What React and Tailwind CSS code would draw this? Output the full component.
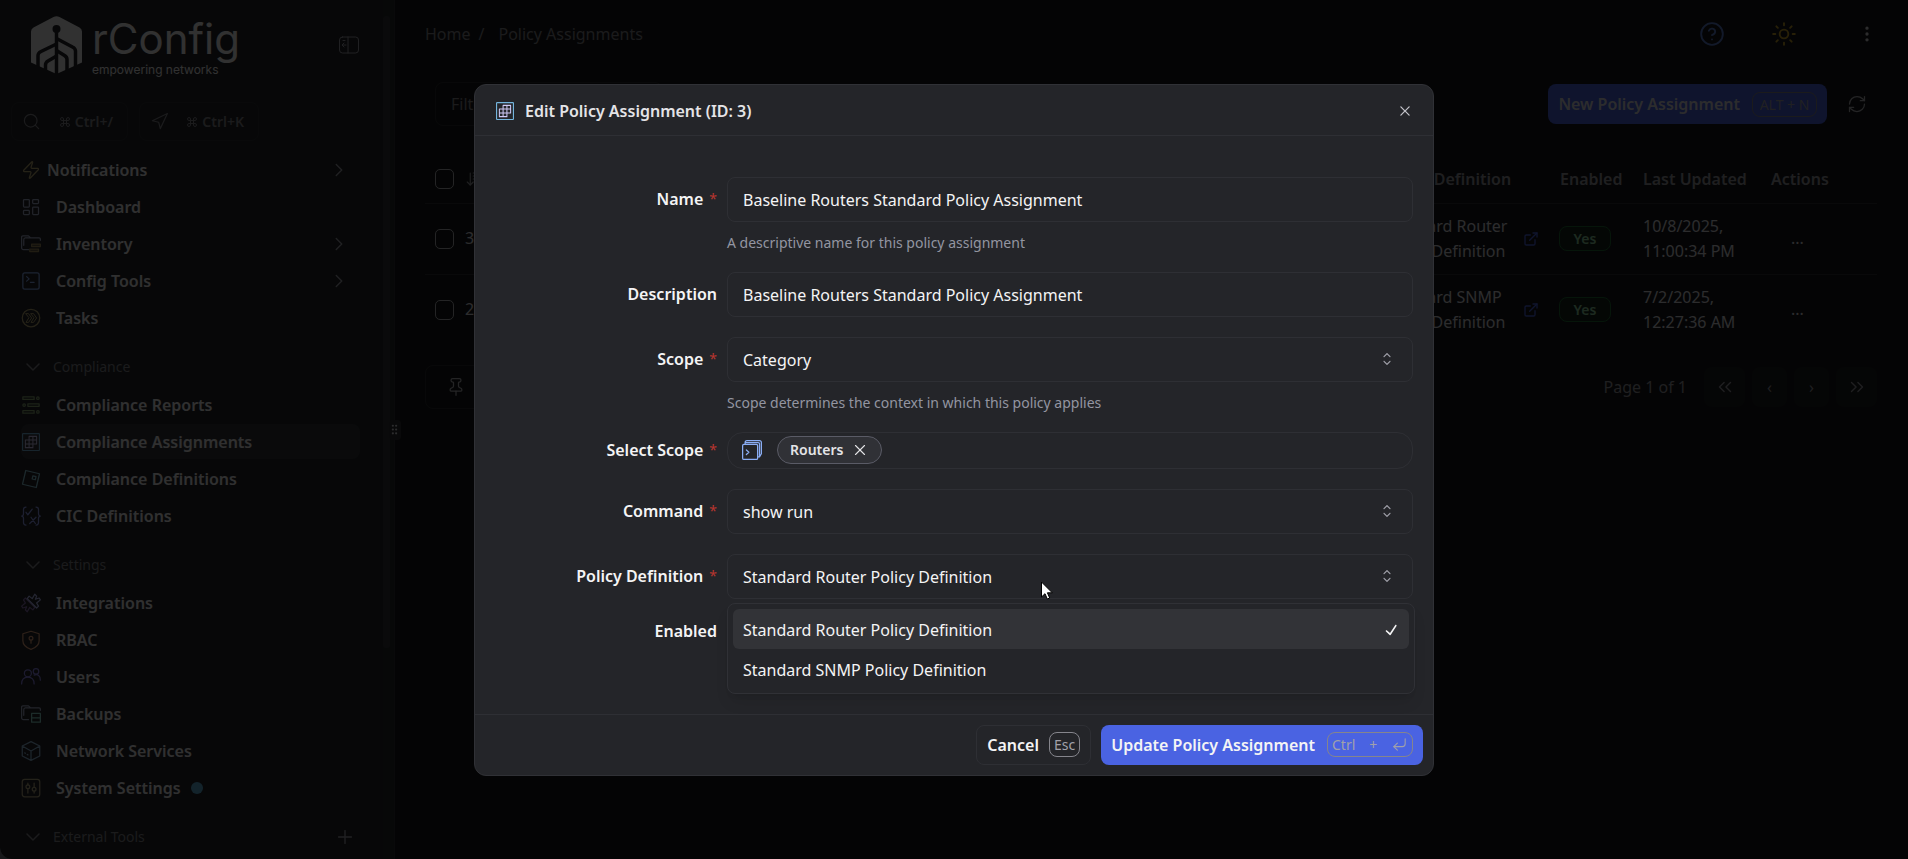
import { useState } from 'react';
import {
  ArrowDownWideNarrow,
  ChevronDown,
  ChevronRight,
  ChevronsLeft,
  ChevronsRight,
  CircleHelp,
  Command,
  CornerDownLeft,
  EllipsisVertical,
  ExternalLink,
  GripVertical,
  LayoutDashboard,
  Navigation,
  Pin,
  Plus,
  RefreshCw,
  Search,
  Sun,
  X,
  Zap
} from 'lucide-react';
import { RxCaretSort, RxCheck, RxCross2 } from 'react-icons/rx';

const Glyph = ({ children, className = 'size-5' }) => (
  <svg viewBox="0 0 16 16" className={`shrink-0 ${className}`} fill="none" strokeLinecap="round" strokeLinejoin="round" aria-hidden="true">
    {children}
  </svg>
);

const InventoryIcon = () => (
  <Glyph>
    <path stroke="#a5adcb" d="M6 12.5H2A1.5 1.5 0 0 1 .5 11V2.5a1 1 0 0 1 1-1H6L7.5 3h7a1 1 0 0 1 1 1v1M2.2 9V4.5A1.5 1.5 0 0 1 3.5 3h4" />
    <path stroke="#a08c5c" fill="#a08c5c" fillOpacity=".5" d="M8.5 8h7v2h-7zM7 12h7v2H7z" />
  </Glyph>
);

const ConfigIcon = () => (
  <Glyph>
    <rect x="1.5" y="1.5" width="13" height="13" rx="1.5" stroke="#8aadf4" />
    <path stroke="#8aadf4" d="M4.5 4.5l2 1.8-2 1.8M7.5 9h3" />
  </Glyph>
);

const TasksIcon = () => (
  <Glyph>
    <circle cx="8" cy="8" r="7" stroke="#b8a874" />
    <path stroke="#b8a874" strokeWidth=".8" d="M4 4.5h2L8.5 8 6 11.5H4L6.2 8zM8 4.5h2L12.5 8 10 11.5H8L10.2 8z" />
  </Glyph>
);

const ReportsIcon = () => (
  <Glyph>
    <g stroke="#8ba876">
      <path d="M1.5 1.5h9v2h-9zM5.5 7h9v2h-9zM1.5 12.5h9v2h-9z" />
      <circle cx="13.5" cy="2.5" r="1" />
      <circle cx="2.5" cy="8" r="1" />
      <circle cx="13.5" cy="13.5" r="1" />
    </g>
  </Glyph>
);

const AssignmentsIcon = () => (
  <Glyph className="size-[18px]">
    <rect x=".5" y=".5" width="15" height="15" rx=".5" stroke="#74b4dc" />
    <path stroke="#cfc9f5" strokeWidth=".9" d="M6.3 3H13v6.7H9.7V13H3V6.3h10M3 9.7h6.7M6.3 3v10M9.7 3v6.7" />
  </Glyph>
);

const DefinitionsIcon = () => (
  <Glyph>
    <path stroke="#8bc6d8" d="M3.8 1.2l11 2.6-2.6 11-11-2.6z" />
    <path stroke="#8bc6d8" d="M9.5 5.5l2.5.6-.6 2.5-2.5-.6z" />
  </Glyph>
);

const CicIcon = () => (
  <Glyph>
    <g stroke="#8f9df0">
      <path d="M4 .8c-1.5 0-2 .7-2 2V6c0 1-.5 2-1.5 2 1 0 1.5 1 1.5 2v3.2c0 1.3.5 2 2 2M12 .8c1.5 0 2 .7 2 2V6c0 1 .5 2 1.5 2-1 0-1.5 1-1.5 2v3.2c0 1.3-.5 2-2 2" />
      <path d="M4 5l1.5 2L9 2.5M8 9l3.5 5M12 9l-5 5" />
    </g>
  </Glyph>
);

const IntegrationsIcon = () => (
  <Glyph>
    <path stroke="#8a6fb0" d="M11 11.5L9.5 13.5 7 11.5 5 15l-1.5-1.5L4.5 11l-3 1L.5 10.5 3.5 8 2 5.5 3.5 4z" />
    <path stroke="#b7bdf8" d="M5 4.5L6.5 2.5 9 4.5 11 1l1.5 1.5L11.5 5l3-1 1 1.5L12.5 8l1.5 2.5-1.5 1.5z" />
  </Glyph>
);

const RbacIcon = () => (
  <Glyph>
    <g stroke="#e0a07c">
      <path d="M8 1l6.5 2v5.5c0 3-2.5 5.5-6.5 7-4-1.5-6.5-4-6.5-7V3z" />
      <circle cx="8" cy="6.5" r="1.5" />
      <path d="M8 8v2.5" />
    </g>
  </Glyph>
);

const UsersIcon = () => (
  <Glyph>
    <g stroke="#8c84e8">
      <circle cx="5.5" cy="5" r="2.8" />
      <circle cx="12" cy="3.5" r="2.2" />
      <path d="M.5 13.5c0-3.5 2-5.5 5-5.5s5 2 5 5.5M10.5 6.5c3-1 5 .5 5 4" />
    </g>
  </Glyph>
);

const BackupsIcon = () => (
  <Glyph>
    <path stroke="#a5adcb" d="M6 12.5H2A1.5 1.5 0 0 1 .5 11V2.5a1 1 0 0 1 1-1H6L7.5 3h7a1 1 0 0 1 1 1v1M2.2 9V4.5A1.5 1.5 0 0 1 3.5 3h4" />
    <path stroke="#8bd5ca" d="M8.5 7.5h7v7h-7zM8.5 11h7" />
  </Glyph>
);

const NetworkIcon = () => (
  <Glyph>
    <path stroke="#8fb7d6" d="M8 .5l7 3.5v8l-7 3.5L1 12V4zM1 4l7 4 7-4M8 8v7.5M3 9.5l.5.3M5 10.8l.5.3" />
  </Glyph>
);

const SystemIcon = () => (
  <Glyph>
    <g stroke="#b5a983">
      <rect x="1" y="1" width="14" height="14" rx="2" />
      <circle cx="5.5" cy="7" r="1.5" />
      <circle cx="10.5" cy="9" r="1.5" />
      <path d="M5.5 4v1.5M5.5 8.5V12M10.5 4v3.5M10.5 10.5V12" />
    </g>
  </Glyph>
);

const CategoryIcon = () => (
  <Glyph>
    <g stroke="#8aadf4">
      <rect x=".5" y="3.5" width="12" height="12" rx="1" />
      <path d="M2.5 3.5V2a1.5 1.5 0 0 1 1.5-1.5h10A1.5 1.5 0 0 1 15.5 2v9l-1.5 2.5h-1.5M2.5 2h10.5a1 1 0 0 1 1 1v10M3.5 8l2 1.8-2 1.8" />
    </g>
  </Glyph>
);

const Logo = () => (
  <div className="flex items-start gap-2.5 text-[#f4f4f5]">
    <svg viewBox="0 0 51 58" className="h-[58px] w-[51px]" fill="none" aria-hidden="true">
      <path fill="currentColor" d="M22.5 1a6 6 0 0 1 6 0L48.5 11.5A5 5 0 0 1 51 16v30.5L25.5 58 0 46.5V16a5 5 0 0 1 2.5-4.5z" />
      <circle cx="25.5" cy="13" r="4" fill="#242529" />
      <g stroke="#242529" strokeWidth="3.5" strokeLinejoin="round">
        <path d="M25.5 13v45" />
        <path d="M25.5 22.5L41.5 31q3 1.5 3 4v20M25.5 28L10 35.5q-3 1.5-3 4V56" />
        <path d="M25.5 34.5l8 5q2.5 1.5 2.5 4V58M25.5 40l-8.5 5q-2.5 1.5-2.5 4v9" />
      </g>
    </svg>
    <div className="flex flex-col font-['Inter',sans-serif]">
      <span className="text-[42px] leading-[46px]">rConfig</span>
      <span className="text-xs leading-4">empowering networks</span>
    </div>
  </div>
);

const mainLinks = [
  { label: 'Dashboard', icon: <LayoutDashboard size={20} strokeWidth={1.5} className="text-[#a5adcb]" /> },
  { label: 'Inventory', icon: <InventoryIcon />, expandable: true },
  { label: 'Config Tools', icon: <ConfigIcon />, expandable: true },
  { label: 'Tasks', icon: <TasksIcon /> }
];

const complianceLinks = [
  { label: 'Compliance Reports', icon: <ReportsIcon /> },
  { label: 'Compliance Assignments', icon: <AssignmentsIcon />, active: true },
  { label: 'Compliance Definitions', icon: <DefinitionsIcon /> },
  { label: 'CIC Definitions', icon: <CicIcon /> }
];

const settingsLinks = [
  { label: 'Integrations', icon: <IntegrationsIcon /> },
  { label: 'RBAC', icon: <RbacIcon /> },
  { label: 'Users', icon: <UsersIcon /> },
  { label: 'Backups', icon: <BackupsIcon /> },
  { label: 'Network Services', icon: <NetworkIcon /> },
  { label: 'System Settings', icon: <SystemIcon />, dot: true }
];

const NavLink = ({ label, icon, active, expandable, dot }) => (
  <a href="#" className={`flex h-[35px] items-center rounded-lg pr-2.5 ${active ? 'bg-[#35363b]' : ''}`}>
    <span className="flex w-5 shrink-0 justify-center">{icon}</span>
    <span className="ml-[15px] font-semibold">{label}</span>
    {dot && <span className="ml-2.5 size-3 rounded-full bg-[#5fb0d8]" />}
    {expandable && <ChevronRight size={22} strokeWidth={1.5} className="ml-auto text-[#a1a1aa]" />}
  </a>
);

const SectionHeader = ({ label, action }) => (
  <div className="mt-3 mb-px flex h-[35px] items-center pr-1 text-sm text-[#85858c]">
    <button type="button" className="flex items-center gap-2">
      <ChevronDown size={24} strokeWidth={1.5} />
      {label}
    </button>
    {action && (
      <button type="button" aria-label="Add external tool" className="ml-auto text-[#a1a1aa]">
        <Plus size={22} strokeWidth={1.5} />
      </button>
    )}
  </div>
);

const Sidebar = () => (
  <aside className="flex w-[394px] shrink-0 rounded-bl-xl bg-[#242529] text-[#eeeef0]">
    <div className="flex min-w-0 grow flex-col pl-[11px]">
      <div className="flex h-[102px] items-start justify-between pt-4 pr-6 pl-5">
        <Logo />
        <button type="button" aria-label="Collapse sidebar" className="mt-5 text-[#a1a1aa]">
          <svg viewBox="0 0 20 18" className="h-[18px] w-5" fill="none" stroke="currentColor" strokeLinecap="round">
            <rect x=".5" y="1" width="19" height="16" rx="3" />
            <path d="M9 1v16M7 9H3.5M5 7L3 9l2 2M4 4.500h2" />
          </svg>
        </button>
      </div>
      <div className="flex gap-[11px]">
        <button type="button" className="flex h-[39px] w-[117px] items-center justify-between rounded-lg border border-[#303136] pr-3.5 pl-2.5 text-[#85858c]">
          <Search size={19} strokeWidth={1.5} />
          <span className="flex items-center gap-1 text-sm font-semibold"><Command size={12} />Ctrl+/</span>
        </button>
        <button type="button" className="flex h-[39px] w-[120px] items-center justify-between rounded-lg border border-[#303136] pr-3.5 pl-2.5 text-[#85858c]">
          <Navigation size={19} strokeWidth={1.5} />
          <span className="flex items-center gap-1 text-sm font-semibold"><Command size={12} />Ctrl+K</span>
        </button>
      </div>
      <nav className="mt-[11px] mr-[23px] ml-2.5 flex flex-col gap-0.5">
        <a href="#" className="flex h-[35px] items-center pr-2.5">
          <Zap size={20} strokeWidth={1.5} className="text-[#b8a874]" />
          <span className="ml-1.5 font-semibold">Notifications</span>
          <ChevronRight size={22} strokeWidth={1.5} className="ml-auto text-[#a1a1aa]" />
        </a>
        {mainLinks.map(link => <NavLink key={link.label} {...link} />)}
        <SectionHeader label="Compliance" />
        {complianceLinks.map(link => <NavLink key={link.label} {...link} />)}
        <SectionHeader label="Settings" />
        {settingsLinks.map(link => <NavLink key={link.label} {...link} />)}
        <SectionHeader label="External Tools" action />
      </nav>
    </div>
    <div className="flex w-[11px] flex-col bg-[#27282c] pt-4">
      <div className="h-3/4 w-[7px] rounded-full bg-[#34353a]" />
    </div>
  </aside>
);

const rows = [
  { id: 3, definition: 'Standard Router Policy Definition', date: '10/8/2025,', time: '11:00:34 PM' },
  { id: 2, definition: 'Standard SNMP Policy Definition', date: '7/2/2025,', time: '12:27:36 AM' }
];

const Checkbox = ({ label }) => (
  <input type="checkbox" aria-label={label} className="block h-5 w-[19px] appearance-none rounded-[5px] border border-[#b4b4ba]" />
);

const PolicyTable = () => (
  <table className="mt-7 w-full table-fixed border-collapse text-left">
    <colgroup>
      <col className="w-[30px]" />
      <col className="w-[90px]" />
      <col />
      <col className="w-[176px]" />
      <col className="w-[83px]" />
      <col className="w-32" />
      <col className="w-[116px]" />
    </colgroup>
    <thead>
      <tr className="h-12 border-b border-[#303136] text-[#9a9aa2]">
        <th className="pl-2.5"><Checkbox label="Select all" /></th>
        <th className="px-2.5"><ArrowDownWideNarrow size={18} strokeWidth={1.5} /></th>
        <th className="px-2.5 font-semibold" aria-label="Policy name" />
        <th className="px-2.5 font-semibold whitespace-nowrap">Policy Definition</th>
        <th className="px-2.5 font-semibold">Enabled</th>
        <th className="px-2.5 font-semibold whitespace-nowrap">Last Updated</th>
        <th className="px-2.5 font-semibold">Actions</th>
      </tr>
    </thead>
    <tbody className="divide-y divide-[#303136]">
      {rows.map(row => (
        <tr key={row.id} className="h-[71px] leading-[25px] text-[#dcdce0]">
          <td className="pl-2.5"><Checkbox label={`Select ${row.id}`} /></td>
          <td className="px-2.5">{row.id}</td>
          <td />
          <td className="pl-2.5">
            <div className="flex items-center justify-between pr-[11px]">
              <span className="w-[134px]">{row.definition}</span>
              <a href="#" aria-label="Open definition"><ExternalLink size={16} className="text-[#4a63e2]" /></a>
            </div>
          </td>
          <td className="pl-[9px]">
            <span className="flex h-[25px] w-[52px] items-center justify-center rounded-lg border border-[#1f6b35] bg-[#14241c] text-sm font-semibold text-[#8fcf9f]">Yes</span>
          </td>
          <td className="px-2.5">{row.date}<br />{row.time}</td>
          <td className="pl-[30px]"><button type="button" aria-label="Row actions">...</button></td>
        </tr>
      ))}
    </tbody>
  </table>
);

const Page = () => (
  <main className="flex min-w-0 grow flex-col bg-[#17181a] pr-[31px] pl-[30px]">
    <header className="flex h-[68px] items-center justify-between">
      <nav aria-label="Breadcrumb" className="flex text-[#85858c]">
        <a href="#">Home</a>
        <span className="mr-3.5 ml-2">/</span>
        <a href="#">Policy Assignments</a>
      </nav>
      <div className="flex items-center">
        <button type="button" aria-label="Help" className="text-[#5b7fd0]"><CircleHelp size={26} strokeWidth={1.7} /></button>
        <button type="button" aria-label="Toggle theme" className="ml-[46px] text-[#c9a227]"><Sun size={26} strokeWidth={1.7} /></button>
        <button type="button" aria-label="More" className="ml-[60px] text-[#dcdce0]"><EllipsisVertical size={20} /></button>
      </div>
    </header>
    <div className="mt-[13px] flex h-[46px] items-center">
      <input type="text" aria-label="Filter" placeholder="Filter policy assignments..." className="ml-2.5 h-11 w-[228px] rounded-lg border border-[#2a2b2f] px-[15px] placeholder:text-[#85858c]" />
      <button type="button" className="ml-auto flex h-10 items-center gap-3 rounded-lg bg-[#4a63e2] px-2.5 font-semibold text-[#dcdce0]">
        New Policy Assignment
        <kbd className="w-[65px] rounded-lg border border-[#85858c] text-center font-['Noto_Sans'] text-sm leading-[23px] font-normal text-[#a1a1aa]">ALT + N</kbd>
      </button>
      <button type="button" aria-label="Refresh" className="mr-2.5 ml-5 text-[#b4b4ba]"><RefreshCw size={20} strokeWidth={1.5} /></button>
    </div>
    <PolicyTable />
    <div className="mt-5 flex h-11 items-center justify-between">
      <button type="button" aria-label="Pin" className="h-11 w-[60px] rounded-lg border border-[#2a2b2f] pl-5 text-[#b4b4ba]"><Pin size={20} strokeWidth={1.5} /></button>
      <div className="flex items-center gap-[7px] text-[#9a9aa2]">
        <span className="mr-2.5">Page 1 of 1</span>
        <button type="button" aria-label="First page" className="flex h-10 w-[41px] items-center justify-center rounded-lg bg-[#1d1f20]"><ChevronsLeft size={22} strokeWidth={1.5} /></button>
        <button type="button" aria-label="Previous page" className="h-10 w-[35px] rounded-lg bg-[#1d1f20]">‹</button>
        <button type="button" aria-label="Next page" className="h-10 w-[35px] rounded-lg bg-[#1d1f20]">›</button>
        <button type="button" aria-label="Last page" className="flex h-10 w-[41px] items-center justify-center rounded-lg bg-[#1d1f20]"><ChevronsRight size={22} strokeWidth={1.5} /></button>
      </div>
    </div>
  </main>
);

const controlClass = 'h-[45px] w-full appearance-none rounded-lg border border-[#2e2f34] bg-transparent px-[15px] pt-0.5 text-[#f4f4f5] outline-none';

const Field = ({ id, label, required, hint, children }) => (
  <div className="grid grid-cols-[222px_1fr] gap-x-2.5">
    <label htmlFor={id} className="flex items-center justify-end gap-1.5 font-semibold">
      {label}
      {required && <span className="text-sm font-normal text-[#b8352f]">*</span>}
    </label>
    <div className="relative">{children}</div>
    {hint && <p className="col-start-2 mt-3 text-sm leading-[18px] text-[#9395a1]">{hint}</p>}
  </div>
);

const SelectField = ({ id, value, options, onChange }) => (
  <>
    <select id={id} value={value} onChange={e => onChange(e.target.value)} className={controlClass}>
      {options.map(option => <option key={option}>{option}</option>)}
    </select>
    <RxCaretSort size={20} className="pointer-events-none absolute top-3 right-4 text-[#a1a1aa]" />
  </>
);

const definitions = ['Standard Router Policy Definition', 'Standard SNMP Policy Definition'];

const EditDialog = () => {
  const [form, setForm] = useState({
    name: 'Baseline Routers Standard Policy Assignment',
    description: 'Baseline Routers Standard Policy Assignment',
    scope: 'Category',
    command: 'show run',
    definition: definitions[0]
  });
  const update = key => value => setForm({ ...form, [key]: value });

  return (
    <div role="dialog" aria-labelledby="dialog-title" className="w-full max-w-[960px] rounded-xl border border-[#303136] bg-[#242529] text-[#f4f4f5]">
      <div className="flex h-[51px] items-center border-b border-[#2e2f34] pt-0.5 pr-5 pl-[21px]">
        <AssignmentsIcon />
        <h2 id="dialog-title" className="ml-[11px] font-semibold text-[#e4e4e7]">Edit Policy Assignment (ID: 3)</h2>
        <button type="button" aria-label="Close" className="ml-auto text-[#c4c4ca]"><RxCross2 size={16} /></button>
      </div>

      <form className="flex flex-col gap-5 px-5 pt-[41px] pb-[71px]">
        <Field id="name" label="Name" required hint="A descriptive name for this policy assignment">
          <input id="name" type="text" value={form.name} onChange={e => update('name')(e.target.value)} className={controlClass} />
        </Field>
        <Field id="description" label="Description">
          <input id="description" type="text" value={form.description} onChange={e => update('description')(e.target.value)} className={controlClass} />
        </Field>
        <Field id="scope" label="Scope" required hint="Scope determines the context in which this policy applies">
          <SelectField id="scope" value={form.scope} options={['Category']} onChange={update('scope')} />
        </Field>
        <Field id="scope-items" label="Select Scope" required>
          <div className="flex h-[37px] items-center rounded-2xl border border-[#2e2f34] pl-3.5">
            <CategoryIcon />
            <span className="ml-[15px] flex h-7 items-center gap-2 rounded-full border border-[#5a5b66] bg-[#303136] pr-3 pl-3 text-sm font-semibold text-[#e4e4e7]">
              Routers
              <button type="button" aria-label="Remove Routers"><X size={18} strokeWidth={1.5} /></button>
            </span>
            <input id="scope-items" type="text" className="h-7 min-w-0 grow bg-transparent px-2 outline-none" />
          </div>
        </Field>
        <Field id="command" label="Command" required>
          <SelectField id="command" value={form.command} options={['show run']} onChange={update('command')} />
        </Field>
        <Field id="definition" label="Policy Definition" required>
          <SelectField id="definition" value={form.definition} options={definitions} onChange={update('definition')} />
          <ul role="listbox" aria-label="Policy Definition" className="absolute top-[49px] -right-0.5 left-0 z-10 rounded-lg border border-[#303136] bg-[#242529] px-[5px] pt-[5px] pb-1 shadow-lg">
            {definitions.map(option => (
              <li
                key={option}
                role="option"
                aria-selected={option === form.definition}
                onClick={() => update('definition')(option)}
                className={`flex h-10 items-center justify-between rounded-md pt-0.5 pr-2 pl-2.5 ${option === form.definition ? 'bg-[#323337]' : ''}`}
              >
                {option}
                {option === form.definition && <RxCheck size={20} />}
              </li>
            ))}
          </ul>
          <svg viewBox="0 0 12 19" className="absolute top-[27px] left-[314px] z-20 h-[19px] w-3" aria-hidden="true">
            <path fill="#fff" stroke="#000" d="M.5 1v15l3.5-3.3L6.3 18l2.4-1-2.3-5.2h4.900z" />
          </svg>
        </Field>
        <span className="w-[222px] text-right leading-6 font-semibold">Enabled</span>
      </form>

      <div className="flex h-[61px] items-center justify-end gap-2.5 border-t border-[#2e2f34] pr-2.5 font-semibold">
        <button type="button" className="flex h-10 items-center gap-2.5 rounded-lg border border-[#2e2f34] px-2.5">
          Cancel
          <kbd className="rounded-lg border border-[#85858c] px-1 font-['Noto_Sans'] text-sm leading-[23px] font-normal text-[#a1a1aa]">Esc</kbd>
        </button>
        <button type="submit" className="flex h-10 items-center gap-3 rounded-lg bg-[#4a63e2] px-2.5">
          Update Policy Assignment
          <kbd className="flex h-[25px] w-[86px] items-center justify-between rounded-lg border border-[#85858c] px-1 font-['Noto_Sans'] text-sm font-normal text-[#a1a1aa]">
            <span>Ctrl</span>
            <span>+</span>
            <CornerDownLeft size={17} strokeWidth={1.5} />
          </kbd>
        </button>
      </div>
    </div>
  );
};

export default function App() {
  return (
    <div className="flex h-screen overflow-hidden bg-[#17181a] font-['Noto_Sans',sans-serif] text-base">
      <Sidebar />
      <div className="flex w-px items-center justify-center bg-[#303136]">
        <span className="z-10 flex h-5 w-3 shrink-0 items-center justify-center rounded-sm bg-[#303136]">
          <GripVertical size={13} className="shrink-0 text-[#dcdce0]" />
        </span>
      </div>
      <Page />
      <div className="fixed inset-0 z-30 flex items-center justify-center rounded-bl-xl bg-black/80">
        <EditDialog />
      </div>
    </div>
  );
}
